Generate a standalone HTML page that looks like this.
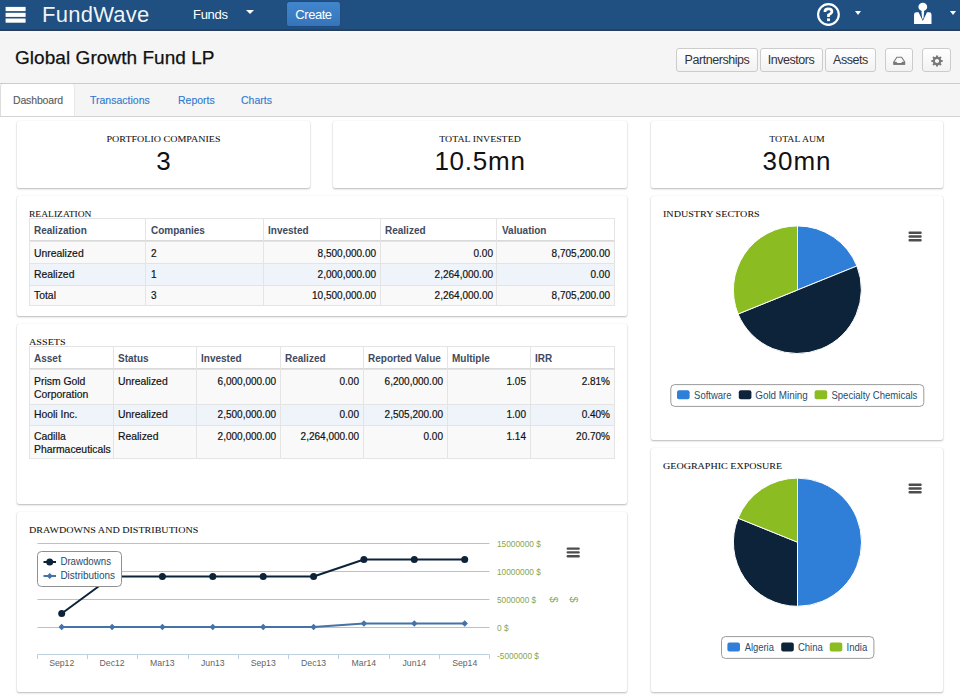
<!DOCTYPE html>
<html>
<head>
<meta charset="utf-8">
<title>FundWave - Global Growth Fund LP</title>
<style>
*{box-sizing:border-box;margin:0;padding:0}
html,body{width:960px;height:699px;overflow:hidden;background:#fff}
body{font-family:"Liberation Sans",sans-serif;font-size:12px;color:#222;position:relative}
.abs{position:absolute}
.t{position:absolute;white-space:nowrap;line-height:1}
/* top bar */
#hdr{position:absolute;left:0;top:0;width:960px;height:30px;background:#205081}
#hdr .bar{position:absolute;left:6px;width:20px;height:3px;background:#fff}
#brand{left:42px;top:4px;font-size:22px;color:rgba(255,255,255,.94);letter-spacing:.25px}
#funds{left:193px;top:7.5px;font-size:13px;color:#fff;letter-spacing:-.3px}
.caret{position:absolute;width:0;height:0;border-left:4px solid transparent;border-right:4px solid transparent;border-top:4.5px solid #fff}
.c2{border-left-width:3.8px;border-right-width:3.8px;border-top-width:4.4px}
#create{position:absolute;left:287px;top:2px;width:53px;height:24px;background:linear-gradient(#4186cd,#3674ba);border-radius:2.5px;box-shadow:0 0 0 .5px rgba(30,60,110,.35);color:#fff;font-size:13px;letter-spacing:-.45px;text-align:center;line-height:25px}
/* page header */
#phdr{position:absolute;left:0;top:30px;width:960px;height:54px;background:#f5f5f5;border-bottom:1px solid #ccc}
#title{left:15px;top:48px;letter-spacing:.05px;-webkit-text-stroke:.25px #111;font-size:19px;color:#111}
.btn{position:absolute;top:48px;height:24px;border:1px solid #ccc;border-radius:3px;background:linear-gradient(#fff,#f2f2f2);color:#333;font-size:12.5px;line-height:22px;text-align:center;letter-spacing:-.45px}
/* tabs */
#tabs{position:absolute;left:0;top:84px;width:960px;height:33px;background:#f5f5f5;border-bottom:1px solid #d4d4d4}
#tab1{position:absolute;left:0;top:84px;width:75px;height:32px;background:#fff;border:1px solid #e8e8e8;border-top:none;border-bottom:none;border-left:1px solid #ddd;border-radius:3px 3px 0 0}
.tab{top:95px;font-size:10.5px;color:#2f78d0;-webkit-text-stroke:.12px currentColor}
/* cards */
.card{position:absolute;background:#fff;border-radius:2px;box-shadow:0 1px 2px rgba(0,0,0,.27),0 0 1px rgba(0,0,0,.12)}
.ct{position:absolute;white-space:nowrap;line-height:1;font-family:"Liberation Serif",serif;font-size:8.8px;color:#111;letter-spacing:0;-webkit-text-stroke:.06px #111;transform-origin:0 50%}
.num{position:absolute;white-space:nowrap;line-height:1;font-size:26px;color:#111;text-align:center}
.td{font-size:10px;color:#111;-webkit-text-stroke:.18px #111}
.tx{font-size:10.4px}
.th{font-size:10px;color:#414a5c;font-weight:bold}
</style>
</head>
<body>
<!-- top bar -->
<div id="hdr">
  <svg class="abs" style="left:0;top:0" width="40" height="30" viewBox="0 0 40 30"><rect x="5.6" y="6.9" width="20" height="4.2" fill="#fff"/><rect x="5.6" y="12.8" width="20" height="4.1" fill="#fff"/><rect x="5.6" y="18.5" width="20" height="4.2" fill="#fff"/></svg>
  <div class="t" id="brand">FundWave</div>
  <div class="t" id="funds">Funds</div>
  <div class="caret" style="left:246px;top:10px"></div>
  <div id="create">Create</div>
  <svg class="abs" style="left:814px;top:0.9px" width="28" height="28" viewBox="0 0 28 28"><circle cx="14.45" cy="13.5" r="10.35" fill="none" stroke="#fff" stroke-width="2.15"/><path d="M10.9 10.9 Q10.9 7.9 14.4 7.9 Q17.9 7.9 17.9 10.6 Q17.9 12.4 14.5 13.9 L14.5 15.9" fill="none" stroke="#fff" stroke-width="2.7"/><rect x="13.05" y="17.4" width="2.9" height="2.7" fill="#fff"/></svg>
  <div class="caret c2" style="left:854.6px;top:10.5px"></div>
  <svg class="abs" style="left:912px;top:1px" width="22" height="24" viewBox="0 0 22 24"><ellipse cx="10.8" cy="5.9" rx="4.4" ry="4.2" fill="#fff"/><path d="M2.05 23 L2.05 13.6 Q2.05 11.3 4.4 11.3 L6.6 11.3 L10.8 19.9 L15 11.3 L17.1 11.3 Q19.5 11.3 19.5 13.6 L19.5 23 Z" fill="#fff"/><path d="M9.7 9.5 L11.9 9.5 L12.1 11.6 L11.6 16.3 L10.8 18.7 L10 16.3 L9.5 11.6 Z" fill="#fff"/></svg>
  <div class="caret c2" style="left:950px;top:10.5px"></div>
</div>
<!-- page header -->
<div id="phdr"></div>
<div class="abs" style="left:0;top:29px;width:960px;height:1px;background:#1f4470"></div>
<div class="abs" style="left:0;top:30px;width:960px;height:1px;background:#263c5c"></div>
<div class="abs" style="left:0;top:31px;width:960px;height:2px;background:#f9f9f9"></div>
<div class="t" id="title">Global Growth Fund LP</div>
<div class="btn" style="left:676px;width:82px">Partnerships</div>
<div class="btn" style="left:759.5px;width:63px">Investors</div>
<div class="btn" style="left:825px;width:51px">Assets</div>
<div class="btn" style="left:885px;width:28px"><svg class="abs" style="left:0;top:0" width="26" height="22" viewBox="0 0 26 22"><path d="M10.9 8.2 L15.6 8.2 L18.6 12.8 L18.6 15.2 L7.9 15.2 L7.9 12.8 Z" fill="#fafafa" stroke="#787878" stroke-width="1.1" stroke-linejoin="round"/><path d="M7.4 12.8 L10.4 12.8 L11.2 14 L15.3 14 L16.1 12.8 L19.1 12.8 L19.1 15.8 L7.4 15.8 Z" fill="#787878"/></svg></div>
<div class="btn" style="left:922px;width:29px"><svg class="abs" style="left:6.7px;top:4.6px" width="14" height="14" viewBox="0 0 14 14"><path d="M6.02 1.38 L7.98 1.38 L8.00 2.82 L9.25 3.33 L10.28 2.34 L11.66 3.72 L10.67 4.75 L11.18 6.00 L12.62 6.02 L12.62 7.98 L11.18 8.00 L10.67 9.25 L11.66 10.28 L10.28 11.66 L9.25 10.67 L8.00 11.18 L7.98 12.62 L6.02 12.62 L6.00 11.18 L4.75 10.67 L3.72 11.66 L2.34 10.28 L3.33 9.25 L2.82 8.00 L1.38 7.98 L1.38 6.02 L2.82 6.00 L3.33 4.75 L2.34 3.72 L3.72 2.34 L4.75 3.33 L6.00 2.82 Z M7 4.9 A2.1 2.1 0 1 0 7.01 4.9 Z" fill="#787878" fill-rule="evenodd"/></svg></div>
<!-- tabs -->
<div id="tabs"></div>
<div id="tab1"></div>
<div class="t tab" style="left:13px;color:#5a5a5a;letter-spacing:-.15px">Dashboard</div>
<div class="t tab" style="left:90px">Transactions</div>
<div class="t tab" style="left:178px">Reports</div>
<div class="t tab" style="left:241px">Charts</div>
<!-- stat cards -->
<div class="card" style="left:17px;top:121px;width:293px;height:67px"></div>
<div class="card" style="left:333px;top:121px;width:294px;height:67px"></div>
<div class="card" style="left:651px;top:121px;width:292px;height:67px"></div>
<div class="ct" style="left:17px;width:293px;top:135px;text-align:center;transform:scaleX(1.139);transform-origin:50% 50%">PORTFOLIO COMPANIES</div>
<div class="ct" style="left:333px;width:294px;top:135px;text-align:center;transform:scaleX(1.119);transform-origin:50% 50%">TOTAL INVESTED</div>
<div class="ct" style="left:651px;width:292px;top:135px;text-align:center;transform:scaleX(1.11);transform-origin:50% 50%">TOTAL AUM</div>
<div class="num" style="left:17px;width:293px;top:148px">3</div>
<div class="num" style="left:333px;width:294px;top:148px;letter-spacing:.75px">10.5mn</div>
<div class="num" style="left:651px;width:292px;top:148px;letter-spacing:1px">30mn</div>
<!-- big cards -->
<div class="card" style="left:17px;top:196px;width:610px;height:120px"></div>
<div class="card" style="left:17px;top:324px;width:610px;height:180px"></div>
<div class="card" style="left:17px;top:512px;width:610px;height:180px"></div>
<div class="card" style="left:651px;top:196px;width:292px;height:244px"></div>
<div class="card" style="left:651px;top:448px;width:292px;height:244px"></div>
<div class="ct" style="left:29px;top:210px;transform:scaleX(1.084)">REALIZATION</div>
<div class="ct" style="left:29px;top:338px;transform:scaleX(1.155)">ASSETS</div>
<div class="ct" style="left:29px;top:526px;transform:scaleX(1.145)">DRAWDOWNS AND DISTRIBUTIONS</div>
<div class="ct" style="left:663px;top:210px;transform:scaleX(1.147)">INDUSTRY SECTORS</div>
<div class="ct" style="left:663px;top:462px;transform:scaleX(1.142)">GEOGRAPHIC EXPOSURE</div>
<div class="abs" style="left:29px;top:218px;width:585px;height:87px;background:#fff;"></div>
<div class="abs" style="left:29px;top:242px;width:585px;height:21px;background:#f9f9f9;"></div>
<div class="abs" style="left:29px;top:263px;width:585px;height:22px;background:#eff4fa;"></div>
<div class="abs" style="left:29px;top:285px;width:585px;height:20px;background:#f9f9f9;"></div>
<div class="abs" style="left:29px;top:218px;width:586px;height:1px;background:#e4e4e4;"></div>
<div class="abs" style="left:29px;top:240px;width:586px;height:1px;background:#d9d9d9;"></div>
<div class="abs" style="left:29px;top:241px;width:586px;height:1px;background:#e3e3e3;"></div>
<div class="abs" style="left:29px;top:263px;width:586px;height:1px;background:#e4e4e4;"></div>
<div class="abs" style="left:29px;top:285px;width:586px;height:1px;background:#e4e4e4;"></div>
<div class="abs" style="left:29px;top:305px;width:586px;height:1px;background:#e4e4e4;"></div>
<div class="abs" style="left:29px;top:218px;width:1px;height:88px;background:#e4e4e4;"></div>
<div class="abs" style="left:145px;top:218px;width:1px;height:88px;background:#e4e4e4;"></div>
<div class="abs" style="left:263px;top:218px;width:1px;height:88px;background:#e4e4e4;"></div>
<div class="abs" style="left:380px;top:218px;width:1px;height:88px;background:#e4e4e4;"></div>
<div class="abs" style="left:496px;top:218px;width:1px;height:88px;background:#e4e4e4;"></div>
<div class="abs" style="left:614px;top:218px;width:1px;height:88px;background:#e4e4e4;"></div>
<div class="t th" style="left:34px;top:226px;">Realization</div>
<div class="t th" style="left:151px;top:226px;">Companies</div>
<div class="t th" style="left:268px;top:226px;">Invested</div>
<div class="t th" style="left:385px;top:226px;">Realized</div>
<div class="t th" style="left:502px;top:226px;">Valuation</div>
<div class="t td tx" style="left:34px;top:249px;">Unrealized</div>
<div class="t td" style="left:151px;top:249px;">2</div>
<div class="t td" style="right:584px;top:249px;">8,500,000.00</div>
<div class="t td" style="right:467px;top:249px;">0.00</div>
<div class="t td" style="right:350px;top:249px;">8,705,200.00</div>
<div class="t td tx" style="left:34px;top:270px;">Realized</div>
<div class="t td" style="left:151px;top:270px;">1</div>
<div class="t td" style="right:584px;top:270px;">2,000,000.00</div>
<div class="t td" style="right:467px;top:270px;">2,264,000.00</div>
<div class="t td" style="right:350px;top:270px;">0.00</div>
<div class="t td tx" style="left:34px;top:291px;">Total</div>
<div class="t td" style="left:151px;top:291px;">3</div>
<div class="t td" style="right:584px;top:291px;">10,500,000.00</div>
<div class="t td" style="right:467px;top:291px;">2,264,000.00</div>
<div class="t td" style="right:350px;top:291px;">8,705,200.00</div>
<div class="abs" style="left:29px;top:346px;width:585px;height:112px;background:#fff;"></div>
<div class="abs" style="left:29px;top:370px;width:585px;height:34px;background:#f9f9f9;"></div>
<div class="abs" style="left:29px;top:404px;width:585px;height:21px;background:#eff4fa;"></div>
<div class="abs" style="left:29px;top:425px;width:585px;height:33px;background:#f9f9f9;"></div>
<div class="abs" style="left:29px;top:346px;width:586px;height:1px;background:#e4e4e4;"></div>
<div class="abs" style="left:29px;top:368px;width:586px;height:1px;background:#d9d9d9;"></div>
<div class="abs" style="left:29px;top:369px;width:586px;height:1px;background:#e3e3e3;"></div>
<div class="abs" style="left:29px;top:404px;width:586px;height:1px;background:#e4e4e4;"></div>
<div class="abs" style="left:29px;top:425px;width:586px;height:1px;background:#e4e4e4;"></div>
<div class="abs" style="left:29px;top:458px;width:586px;height:1px;background:#e4e4e4;"></div>
<div class="abs" style="left:29px;top:346px;width:1px;height:113px;background:#e4e4e4;"></div>
<div class="abs" style="left:113px;top:346px;width:1px;height:113px;background:#e4e4e4;"></div>
<div class="abs" style="left:196px;top:346px;width:1px;height:113px;background:#e4e4e4;"></div>
<div class="abs" style="left:280px;top:346px;width:1px;height:113px;background:#e4e4e4;"></div>
<div class="abs" style="left:363px;top:346px;width:1px;height:113px;background:#e4e4e4;"></div>
<div class="abs" style="left:447px;top:346px;width:1px;height:113px;background:#e4e4e4;"></div>
<div class="abs" style="left:530px;top:346px;width:1px;height:113px;background:#e4e4e4;"></div>
<div class="abs" style="left:614px;top:346px;width:1px;height:113px;background:#e4e4e4;"></div>
<div class="t th" style="left:34px;top:354px;">Asset</div>
<div class="t th" style="left:118px;top:354px;">Status</div>
<div class="t th" style="left:201px;top:354px;">Invested</div>
<div class="t th" style="left:285px;top:354px;">Realized</div>
<div class="t th" style="left:368px;top:354px;">Reported Value</div>
<div class="t th" style="left:452px;top:354px;">Multiple</div>
<div class="t th" style="left:535px;top:354px;">IRR</div>
<div class="t td tx" style="left:34px;top:377px;">Prism Gold</div>
<div class="t td tx" style="left:34px;top:390px;">Corporation</div>
<div class="t td tx" style="left:118px;top:377px;">Unrealized</div>
<div class="t td" style="right:684px;top:377px;">6,000,000.00</div>
<div class="t td" style="right:601px;top:377px;">0.00</div>
<div class="t td" style="right:517px;top:377px;">6,200,000.00</div>
<div class="t td" style="right:434px;top:377px;">1.05</div>
<div class="t td" style="right:350px;top:377px;">2.81%</div>
<div class="t td tx" style="left:34px;top:410px;">Hooli Inc.</div>
<div class="t td tx" style="left:118px;top:410px;">Unrealized</div>
<div class="t td" style="right:684px;top:410px;">2,500,000.00</div>
<div class="t td" style="right:601px;top:410px;">0.00</div>
<div class="t td" style="right:517px;top:410px;">2,505,200.00</div>
<div class="t td" style="right:434px;top:410px;">1.00</div>
<div class="t td" style="right:350px;top:410px;">0.40%</div>
<div class="t td tx" style="left:34px;top:432px;">Cadilla</div>
<div class="t td tx" style="left:34px;top:445px;">Pharmaceuticals</div>
<div class="t td tx" style="left:118px;top:432px;">Realized</div>
<div class="t td" style="right:684px;top:432px;">2,000,000.00</div>
<div class="t td" style="right:601px;top:432px;">2,264,000.00</div>
<div class="t td" style="right:517px;top:432px;">0.00</div>
<div class="t td" style="right:434px;top:432px;">1.14</div>
<div class="t td" style="right:350px;top:432px;">20.70%</div>
<svg class="abs" style="left:0;top:0" width="960" height="699" viewBox="0 0 960 699" font-family="Liberation Sans, sans-serif">
<path d="M797.5 290.0 L797.50 225.90 A64.1 64.1 0 0 1 856.93 265.99 Z" fill="#2f7ed8" stroke="#fff" stroke-width="1" stroke-linejoin="round"/>
<path d="M797.5 290.0 L856.93 265.99 A64.1 64.1 0 0 1 738.07 314.01 Z" fill="#0d233a" stroke="#fff" stroke-width="1" stroke-linejoin="round"/>
<path d="M797.5 290.0 L738.07 314.01 A64.1 64.1 0 0 1 797.50 225.90 Z" fill="#8bbc21" stroke="#fff" stroke-width="1" stroke-linejoin="round"/>
<path d="M797.5 542.2 L797.50 478.10 A64.1 64.1 0 0 1 797.50 606.30 Z" fill="#2f7ed8" stroke="#fff" stroke-width="1" stroke-linejoin="round"/>
<path d="M797.5 542.2 L797.50 606.30 A64.1 64.1 0 0 1 738.07 518.19 Z" fill="#0d233a" stroke="#fff" stroke-width="1" stroke-linejoin="round"/>
<path d="M797.5 542.2 L738.07 518.19 A64.1 64.1 0 0 1 797.50 478.10 Z" fill="#8bbc21" stroke="#fff" stroke-width="1" stroke-linejoin="round"/>
<rect x="908.5" y="231.5" width="13.2" height="2.4" rx="1" fill="#4d4d4d"/>
<rect x="908.5" y="235.3" width="13.2" height="2.4" rx="1" fill="#4d4d4d"/>
<rect x="908.5" y="239.1" width="13.2" height="2.4" rx="1" fill="#4d4d4d"/>
<rect x="908.5" y="483.5" width="13.2" height="2.4" rx="1" fill="#4d4d4d"/>
<rect x="908.5" y="487.3" width="13.2" height="2.4" rx="1" fill="#4d4d4d"/>
<rect x="908.5" y="491.1" width="13.2" height="2.4" rx="1" fill="#4d4d4d"/>
<rect x="566.6" y="547.4" width="13.2" height="2.4" rx="1" fill="#4d4d4d"/>
<rect x="566.6" y="551.2" width="13.2" height="2.4" rx="1" fill="#4d4d4d"/>
<rect x="566.6" y="555.0" width="13.2" height="2.4" rx="1" fill="#4d4d4d"/>
<rect x="670.8" y="384.6" width="253" height="21.8" rx="4" fill="#fff" stroke="#909090" stroke-width="0.9"/>
<rect x="677" y="390.20000000000005" width="12.6" height="9" rx="2" fill="#2f7ed8"/>
<text x="694.1" y="398.6" font-size="10.5" textLength="37.3" lengthAdjust="spacingAndGlyphs" fill="#274b6d">Software</text>
<rect x="738.8" y="390.20000000000005" width="12.6" height="9" rx="2" fill="#0d233a"/>
<text x="755.3" y="398.6" font-size="10.5" textLength="52.5" lengthAdjust="spacingAndGlyphs" fill="#274b6d">Gold Mining</text>
<rect x="814.6" y="390.20000000000005" width="12.6" height="9" rx="2" fill="#8bbc21"/>
<text x="831.4" y="398.6" font-size="10.5" textLength="86" lengthAdjust="spacingAndGlyphs" fill="#274b6d">Specialty Chemicals</text>
<rect x="721.5" y="636.6" width="152.4" height="21.8" rx="4" fill="#fff" stroke="#909090" stroke-width="0.9"/>
<rect x="727.4" y="642.5" width="12.6" height="9" rx="2" fill="#2f7ed8"/>
<text x="744.7" y="650.9" font-size="10.5" textLength="29.2" lengthAdjust="spacingAndGlyphs" fill="#274b6d">Algeria</text>
<rect x="781.2" y="642.5" width="12.6" height="9" rx="2" fill="#0d233a"/>
<text x="797.9" y="650.9" font-size="10.5" textLength="24.8" lengthAdjust="spacingAndGlyphs" fill="#274b6d">China</text>
<rect x="829.7" y="642.5" width="12.6" height="9" rx="2" fill="#8bbc21"/>
<text x="846.6" y="650.9" font-size="10.5" textLength="20.7" lengthAdjust="spacingAndGlyphs" fill="#274b6d">India</text>
<path d="M37.5 543.5 L489.5 543.5" stroke="#c0c0c0" stroke-width="1"/>
<path d="M37.5 571.5 L489.5 571.5" stroke="#c0c0c0" stroke-width="1"/>
<path d="M37.5 599.5 L489.5 599.5" stroke="#c0c0c0" stroke-width="1"/>
<path d="M37.5 627.5 L489.5 627.5" stroke="#c0c0c0" stroke-width="1"/>
<path d="M37.5 654.5 L489.5 654.5" stroke="#c0d0e0" stroke-width="1"/>
<path d="M37.5 654.5 L37.5 659" stroke="#c0d0e0" stroke-width="1"/>
<path d="M87.5 654.5 L87.5 659" stroke="#c0d0e0" stroke-width="1"/>
<path d="M137.5 654.5 L137.5 659" stroke="#c0d0e0" stroke-width="1"/>
<path d="M188.5 654.5 L188.5 659" stroke="#c0d0e0" stroke-width="1"/>
<path d="M238.5 654.5 L238.5 659" stroke="#c0d0e0" stroke-width="1"/>
<path d="M288.5 654.5 L288.5 659" stroke="#c0d0e0" stroke-width="1"/>
<path d="M338.5 654.5 L338.5 659" stroke="#c0d0e0" stroke-width="1"/>
<path d="M389.5 654.5 L389.5 659" stroke="#c0d0e0" stroke-width="1"/>
<path d="M439.5 654.5 L439.5 659" stroke="#c0d0e0" stroke-width="1"/>
<path d="M489.5 654.5 L489.5 659" stroke="#c0d0e0" stroke-width="1"/>
<text x="61.7" y="665.6" font-size="8.7" fill="#636363" text-anchor="middle">Sep12</text>
<text x="112.1" y="665.6" font-size="8.7" fill="#636363" text-anchor="middle">Dec12</text>
<text x="162.4" y="665.6" font-size="8.7" fill="#636363" text-anchor="middle">Mar13</text>
<text x="212.8" y="665.6" font-size="8.7" fill="#636363" text-anchor="middle">Jun13</text>
<text x="263.2" y="665.6" font-size="8.7" fill="#636363" text-anchor="middle">Sep13</text>
<text x="313.6" y="665.6" font-size="8.7" fill="#636363" text-anchor="middle">Dec13</text>
<text x="363.9" y="665.6" font-size="8.7" fill="#636363" text-anchor="middle">Mar14</text>
<text x="414.3" y="665.6" font-size="8.7" fill="#636363" text-anchor="middle">Jun14</text>
<text x="464.7" y="665.6" font-size="8.7" fill="#636363" text-anchor="middle">Sep14</text>
<text x="497" y="546.9" font-size="8.3" fill="#89a54e">15000000 $</text>
<text x="497" y="574.9" font-size="8.3" fill="#89a54e">10000000 $</text>
<text x="497" y="602.9" font-size="8.3" fill="#89a54e">5000000 $</text>
<text x="497" y="630.8" font-size="8.3" fill="#89a54e">0 $</text>
<text x="497" y="658.8" font-size="8.3" fill="#89a54e">-5000000 $</text>
<text x="553.6" y="599.6" font-size="10.4" fill="#89a54e" text-anchor="middle" transform="rotate(90 553.6 599.6)" dy="3.6">$</text>
<text x="573.7" y="599.6" font-size="10.4" fill="#89a54e" text-anchor="middle" transform="rotate(90 573.7 599.6)" dy="3.6">$</text>
<polyline points="61.7 613.5 112.1 576.5 162.4 576.5 212.8 576.5 263.2 576.5 313.6 576.5 363.9 559.5 414.3 559.5 464.7 559.5" fill="none" stroke="#0d233a" stroke-width="2" stroke-linejoin="round"/>
<circle cx="61.7" cy="613.5" r="3.5" fill="#0d233a"/>
<circle cx="112.1" cy="576.5" r="3.5" fill="#0d233a"/>
<circle cx="162.4" cy="576.5" r="3.5" fill="#0d233a"/>
<circle cx="212.8" cy="576.5" r="3.5" fill="#0d233a"/>
<circle cx="263.2" cy="576.5" r="3.5" fill="#0d233a"/>
<circle cx="313.6" cy="576.5" r="3.5" fill="#0d233a"/>
<circle cx="363.9" cy="559.5" r="3.5" fill="#0d233a"/>
<circle cx="414.3" cy="559.5" r="3.5" fill="#0d233a"/>
<circle cx="464.7" cy="559.5" r="3.5" fill="#0d233a"/>
<polyline points="61.7 627 112.1 627 162.4 627 212.8 627 263.2 627 313.6 627 363.9 623.5 414.3 623.5 464.7 623.5" fill="none" stroke="#4572a7" stroke-width="2" stroke-linejoin="round"/>
<path d="M61.7 623.8 L64.9 627 L61.7 630.2 L58.5 627 Z" fill="#4572a7"/>
<path d="M112.1 623.8 L115.3 627 L112.1 630.2 L108.9 627 Z" fill="#4572a7"/>
<path d="M162.4 623.8 L165.6 627 L162.4 630.2 L159.2 627 Z" fill="#4572a7"/>
<path d="M212.8 623.8 L216.0 627 L212.8 630.2 L209.6 627 Z" fill="#4572a7"/>
<path d="M263.2 623.8 L266.4 627 L263.2 630.2 L260.0 627 Z" fill="#4572a7"/>
<path d="M313.6 623.8 L316.8 627 L313.6 630.2 L310.4 627 Z" fill="#4572a7"/>
<path d="M363.9 620.3 L367.1 623.5 L363.9 626.7 L360.7 623.5 Z" fill="#4572a7"/>
<path d="M414.3 620.3 L417.5 623.5 L414.3 626.7 L411.1 623.5 Z" fill="#4572a7"/>
<path d="M464.7 620.3 L467.9 623.5 L464.7 626.7 L461.5 623.5 Z" fill="#4572a7"/>
<rect x="37.5" y="551.5" width="84" height="35" rx="4" fill="#fff" stroke="#909090" stroke-width="1"/>
<path d="M43.5 562 L56 562" stroke="#0d233a" stroke-width="2"/><circle cx="49.7" cy="562" r="3.5" fill="#0d233a"/>
<path d="M43.5 576 L56 576" stroke="#4572a7" stroke-width="2"/>
<path d="M49.7 572.9 L52.8 576 L49.7 579.1 L46.6 576 Z" fill="#4572a7"/>
<text x="60.4" y="565.4" font-size="10.4" textLength="50.6" lengthAdjust="spacingAndGlyphs" fill="#274b6d">Drawdowns</text>
<text x="60.4" y="579" font-size="10.4" textLength="54.7" lengthAdjust="spacingAndGlyphs" fill="#274b6d">Distributions</text>
</svg>
</body>
</html>
